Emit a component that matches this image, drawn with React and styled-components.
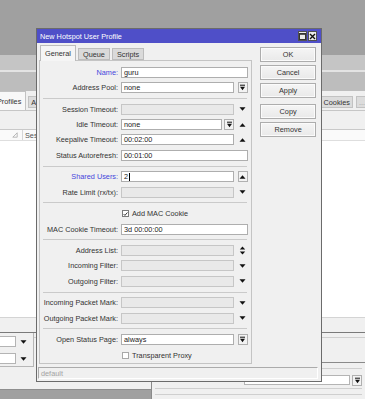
import React from 'react';
import styled, { createGlobalStyle } from 'styled-components';

const GlobalStyle = createGlobalStyle`
  html, body {
    margin: 0;
    padding: 0;
  }
  body {
    background: #a0a0a0;
    font-family: 'Liberation Sans', Arial, sans-serif;
  }
  * {
    box-sizing: border-box;
  }
`;

const Desktop = styled.div`
  position: relative;
  width: 365px;
  height: 399px;
  overflow: hidden;
  background: #a0a0a0;
  font-size: 7.3px;
  color: #2b2b2b;
`;

/* ---------- windows behind the dialog ---------- */

const BackWindow = styled.div`
  position: absolute;
  left: -8px;
  top: 55px;
  width: 378px;
  height: 335px;
  display: flex;
  flex-direction: column;
  background: #f0f0f0;
  border-bottom: 1px solid #8e8e8e;
`;

const Band = styled.div`
  flex-shrink: 0;
  height: ${(p) => p.$h}px;
  background: ${(p) => p.$bg};
  border-bottom: ${(p) => (p.$line ? `2px solid ${p.$line}` : 'none')};
`;

const TabStrip = styled.div`
  flex-shrink: 0;
  height: 20px;
  display: flex;
  align-items: flex-end;
  gap: 2px;
  padding-right: 2px;
  border-bottom: 1px solid #c6c6c6;
`;

const TabGroup = styled.div`
  display: flex;
  align-items: flex-end;
  gap: ${(p) => p.$gap || 2}px;
  margin-left: ${(p) => (p.$right ? 'auto' : '0')};
`;

const BackTab = styled.div`
  height: ${(p) => (p.$active ? 19 : 12)}px;
  margin-bottom: ${(p) => (p.$active ? 0 : 2)}px;
  padding: 0 ${(p) => (p.$active ? 4 : 2)}px;
  display: flex;
  align-items: center;
  white-space: nowrap;
  color: ${(p) => (p.$muted ? '#9c9c9c' : '#333')};
  background: ${(p) => (p.$active ? '#f8f8f8' : '#dcdcdc')};
  border: 1px solid #c2c2c2;
  border-bottom: ${(p) => (p.$active ? 'none' : '1px solid #c2c2c2')};
`;

const ToolArea = styled.div`
  flex-shrink: 0;
  height: 18px;
`;

const ListHeader = styled.div`
  flex-shrink: 0;
  height: 12px;
  display: flex;
  background: #fafafa;
  border-top: 1px solid #c9c9c9;
  border-bottom: 1px solid #dedede;
`;

const SortCell = styled.div`
  width: 31px;
  display: flex;
  align-items: center;
  justify-content: flex-end;
  padding-right: 4px;
  border-right: 1px solid #d6d6d6;
`;

const HeadCell = styled.div`
  width: 14px;
  padding-left: 2px;
  display: flex;
  align-items: center;
  overflow: hidden;
  color: #555;
  white-space: nowrap;
`;

const ListBody = styled.div`
  flex: 1;
  background: #fff;
`;

const StatusRow = styled.div`
  flex-shrink: 0;
  height: 15px;
  border-top: 1px solid #d4d4d4;
`;

const LowerPanel = styled.div`
  flex-shrink: 0;
  height: 35px;
  display: flex;
  border-top: 1px solid #7a7a7a;
`;

const GroupBox = styled.div`
  width: 42px;
  height: 34px;
  display: flex;
  flex-direction: column;
  gap: 6px;
  padding: 3px 6px 0 0;
  border-right: 1px solid #b6b6b6;
  border-bottom: 1px solid #b6b6b6;
`;

const BackRow = styled.div`
  height: 11px;
  display: flex;
  align-items: center;
  gap: 4px;
`;

const BackField = styled.div`
  flex: ${(p) => (p.$w ? 'none' : 1)};
  width: ${(p) => (p.$w ? `${p.$w}px` : 'auto')};
  height: ${(p) => p.$h || 11}px;
  background: #fff;
  border: 1px solid #b4b4b4;
`;

const RightArea = styled.div`
  flex: 1;
  padding-top: 4px;
`;

const BottomArea = styled.div`
  flex-shrink: 0;
  height: 22px;
`;

const LowerWindow = styled.div`
  position: absolute;
  left: 151px;
  top: 362px;
  width: 220px;
  height: 40px;
  display: flex;
  flex-direction: column;
  padding: 5px 9px 0 3px;
  background: #f0f0f0;
  border-top: 1px solid #8a8a8a;
  border-left: 1px solid #8a8a8a;
`;

const Line = styled.div`
  height: 1px;
  flex-shrink: 0;
  margin-top: ${(p) => p.$mt || 0}px;
  background: ${(p) => p.$color || '#cfcfcf'};
`;

const LowerFieldRow = styled.div`
  margin-top: 6px;
  display: flex;
  justify-content: flex-end;
  gap: 2px;
`;

/* ---------- dialog ---------- */

const Dialog = styled.div`
  position: absolute;
  left: 36px;
  top: 28px;
  width: 286px;
  height: 354px;
  display: flex;
  flex-direction: column;
  background: #f0f0f0;
  border: 1px solid #6b6b6b;
`;

const TitleBar = styled.div`
  flex-shrink: 0;
  height: 14px;
  display: flex;
  align-items: center;
  justify-content: space-between;
  padding: 0 4px 0 3px;
  background: #4f4fc8;
  color: #fff;
`;

const TitleButtons = styled.div`
  display: flex;
  gap: 1px;
`;

const TitleButton = styled.div`
  width: 9px;
  height: 10px;
  display: flex;
  align-items: center;
  justify-content: center;
  background: #ebebeb;
  border: 1px solid #505050;
`;

const Body = styled.div`
  flex: 1;
  min-height: 0;
  display: flex;
  gap: 8px;
  padding: 2px 5px 0 2px;
`;

const FormColumn = styled.div`
  width: 214px;
  display: flex;
  flex-direction: column;
`;

const TabRow = styled.div`
  position: relative;
  z-index: 1;
  flex-shrink: 0;
  height: 15px;
  display: flex;
  align-items: flex-end;
  gap: 2px;
  padding-left: 1px;
`;

const Tab = styled.div`
  height: ${(p) => (p.$active ? 16 : 12)}px;
  margin-bottom: ${(p) => (p.$active ? -1 : 0)}px;
  padding: 0 4px;
  display: flex;
  align-items: center;
  color: #333;
  background: ${(p) => (p.$active ? '#f5f5f5' : '#dadada')};
  border: 1px solid #bcbcbc;
  border-bottom: ${(p) => (p.$active ? 'none' : '1px solid #bcbcbc')};
`;

const Panel = styled.div`
  flex: 1;
  display: flex;
  flex-direction: column;
  padding: 6px 3px 0 3px;
  background: #f0f0f0;
  border: 1px solid #c4c4c4;
`;

const Group = styled.div`
  display: flex;
  flex-direction: column;
  gap: 4.3px;
`;

const Rule = styled.div`
  height: 1px;
  margin: 4.8px 1px 4.8px 0;
  background: #cacaca;
`;

const Row = styled.div`
  height: 11px;
  display: grid;
  grid-template-columns: 75px 127px;
  column-gap: 3px;
  align-items: center;
`;

const Label = styled.div`
  text-align: right;
  white-space: nowrap;
  color: ${(p) => (p.$blue ? '#4646dc' : '#333')};
`;

const FieldCell = styled.div`
  height: 11px;
  display: flex;
  align-items: center;
  gap: 2px;
`;

const Input = styled.div`
  flex: 1;
  height: 11px;
  display: flex;
  align-items: center;
  padding: 0 2px;
  overflow: hidden;
  white-space: nowrap;
  color: #222;
  background: ${(p) => (p.$disabled ? '#e9e9e9' : '#fff')};
  border: 1px solid ${(p) => (p.$disabled ? '#c6c6c6' : '#aeaeae')};
`;

const Caret = styled.span`
  display: inline-block;
  width: 1px;
  height: 8px;
  margin-left: 1px;
  background: #000;
`;

const Trail = styled.div`
  width: 12px;
  height: 11px;
  padding-left: 1px;
  display: flex;
  align-items: center;
  justify-content: center;
`;

const MiniButton = styled.div`
  width: 10px;
  height: 11px;
  flex-shrink: 0;
  display: flex;
  align-items: center;
  justify-content: center;
  background: #f3f3f3;
  border: 1px solid #b0b0b0;
`;

const CheckCell = styled.div`
  display: flex;
  align-items: center;
  gap: 3px;
  padding-left: 1px;
  color: #333;
  white-space: nowrap;
`;

const Box = styled.div`
  width: 7px;
  height: 7px;
  display: flex;
  align-items: center;
  justify-content: center;
  background: #fff;
  border: 1px solid ${(p) => (p.$checked ? '#7a7a7a' : '#a8a8a8')};
`;

const ButtonColumn = styled.div`
  width: 56px;
  display: flex;
  flex-direction: column;
  gap: 3px;
  padding-top: 2px;
`;

const DialogButton = styled.div`
  height: 15px;
  margin-top: ${(p) => (p.$spaced ? 3 : 0)}px;
  display: flex;
  align-items: center;
  justify-content: center;
  color: #333;
  background: linear-gradient(#f5f5f5, #e9e9e9);
  border: 1px solid #adadad;
  box-shadow: inset 0 0 0 1px #fbfbfb;
`;

const StatusBar = styled.div`
  flex-shrink: 0;
  height: 12px;
  margin: 3px 3px 2px 1px;
  padding-left: 2px;
  display: flex;
  align-items: center;
  color: #a3a3a3;
  border: 1px solid;
  border-color: #ababab #fff #fff #ababab;
`;

/* ---------- glyphs ---------- */

const Down = () => (
  <svg width="7" height="4" viewBox="0 0 7 4">
    <path d="M0.5 0.3h6L3.5 3.7z" fill="#111" />
  </svg>
);

const Up = () => (
  <svg width="7" height="4" viewBox="0 0 7 4">
    <path d="M0.5 3.7h6L3.5 0.3z" fill="#111" />
  </svg>
);

const UpDown = () => (
  <svg width="7" height="9" viewBox="0 0 7 9">
    <path d="M0.8 3.6h5.4L3.5 0.6z" fill="#111" />
    <path d="M0.8 5.4h5.4L3.5 8.4z" fill="#111" />
  </svg>
);

const MenuGlyph = () => (
  <svg width="7" height="7" viewBox="0 0 7 7">
    <path d="M1 1.2h5" stroke="#111" strokeWidth="1" />
    <path d="M1 2.8h5L3.5 6.2z" fill="#111" />
  </svg>
);

const Tick = () => (
  <svg width="6" height="6" viewBox="0 0 6 6">
    <path d="M0.8 3.1L2.3 4.7L5.3 1.2" stroke="#222" strokeWidth="1.1" fill="none" />
  </svg>
);

const SortMark = () => (
  <svg width="6" height="6" viewBox="0 0 6 6">
    <path d="M0.8 5.2L5.2 0.8V5.2z" stroke="#aaa" strokeWidth="0.8" fill="none" />
  </svg>
);

const MaxGlyph = () => (
  <svg width="7" height="7" viewBox="0 0 7 7">
    <rect x="0.5" y="0.5" width="6" height="6" stroke="#333" fill="none" />
    <path d="M0.5 1.3h6" stroke="#333" />
  </svg>
);

const CloseGlyph = () => (
  <svg width="7" height="7" viewBox="0 0 7 7">
    <path d="M1 1L6 6M6 1L1 6" stroke="#111" strokeWidth="1.4" />
  </svg>
);

const trailGlyph = {
  down: <Down />,
  up: <Up />,
  updown: <UpDown />,
  menu: (
    <MiniButton>
      <MenuGlyph />
    </MiniButton>
  ),
  upbox: (
    <MiniButton>
      <Up />
    </MiniButton>
  ),
};

/* ---------- data ---------- */

const groups = [
  [
    { label: 'Name', value: 'guru', blue: true },
    { label: 'Address Pool', value: 'none', trail: 'menu' },
  ],
  [
    { label: 'Session Timeout', disabled: true, trail: 'down' },
    { label: 'Idle Timeout', value: 'none', menu: true, trail: 'up' },
    { label: 'Keepalive Timeout', value: '00:02:00', trail: 'up' },
    { label: 'Status Autorefresh', value: '00:01:00' },
  ],
  [
    { label: 'Shared Users', value: '2', blue: true, caret: true, trail: 'upbox' },
    { label: 'Rate Limit (rx/tx)', disabled: true, trail: 'down' },
  ],
  [
    { check: 'Add MAC Cookie', checked: true },
    { label: 'MAC Cookie Timeout', value: '3d 00:00:00' },
  ],
  [
    { label: 'Address List', disabled: true, trail: 'updown' },
    { label: 'Incoming Filter', disabled: true, trail: 'down' },
    { label: 'Outgoing Filter', disabled: true, trail: 'down' },
  ],
  [
    { label: 'Incoming Packet Mark', disabled: true, trail: 'down' },
    { label: 'Outgoing Packet Mark', disabled: true, trail: 'down' },
  ],
  [
    { label: 'Open Status Page', value: 'always', trail: 'menu' },
    { check: 'Transparent Proxy' },
  ],
];

const buttons = [
  { text: 'OK' },
  { text: 'Cancel' },
  { text: 'Apply' },
  { text: 'Copy', spaced: true },
  { text: 'Remove' },
];

const FormRow = ({ item }) => {
  if (item.check) {
    return (
      <Row>
        <span />
        <CheckCell>
          <Box $checked={item.checked}>{item.checked && <Tick />}</Box>
          {item.check}
        </CheckCell>
      </Row>
    );
  }
  return (
    <Row>
      <Label $blue={item.blue}>{item.label}:</Label>
      <FieldCell>
        <Input $disabled={item.disabled}>
          {item.value}
          {item.caret && <Caret />}
        </Input>
        {item.menu && (
          <MiniButton>
            <MenuGlyph />
          </MiniButton>
        )}
        {item.trail && <Trail>{trailGlyph[item.trail]}</Trail>}
      </FieldCell>
    </Row>
  );
};

const App = () => (
  <>
    <GlobalStyle />
    <Desktop>
      <BackWindow>
        <Band $h={17} $bg='#c5c5c5' $line='#e3e3e3' />
        <Band $h={19} $bg='#bdbdbd' />
        <TabStrip>
          <TabGroup>
            <BackTab $active>Profiles</BackTab>
            <BackTab>Active</BackTab>
          </TabGroup>
          <TabGroup $right $gap={3}>
            <BackTab>Cookies</BackTab>
            <BackTab $muted>...</BackTab>
          </TabGroup>
        </TabStrip>
        <ToolArea />
        <ListHeader>
          <SortCell>
            <SortMark />
          </SortCell>
          <HeadCell>Ses</HeadCell>
        </ListHeader>
        <ListBody />
        <StatusRow />
        <LowerPanel>
          <GroupBox>
            <BackRow>
              <BackField />
              <Down />
            </BackRow>
            <BackRow>
              <BackField />
              <Down />
            </BackRow>
          </GroupBox>
          <RightArea>
            <Line />
          </RightArea>
        </LowerPanel>
        <BottomArea />
      </BackWindow>

      <LowerWindow>
        <Line />
        <LowerFieldRow>
          <BackField $w={106} $h={10} />
          <MiniButton>
            <MenuGlyph />
          </MiniButton>
        </LowerFieldRow>
        <Line $mt={2} />
        <Line $mt={5} />
      </LowerWindow>

      <Dialog>
        <TitleBar>
          <span>New Hotspot User Profile</span>
          <TitleButtons>
            <TitleButton>
              <MaxGlyph />
            </TitleButton>
            <TitleButton>
              <CloseGlyph />
            </TitleButton>
          </TitleButtons>
        </TitleBar>
        <Body>
          <FormColumn>
            <TabRow>
              <Tab $active>General</Tab>
              <Tab>Queue</Tab>
              <Tab>Scripts</Tab>
            </TabRow>
            <Panel>
              {groups.map((group, gi) => (
                <React.Fragment key={gi}>
                  {gi > 0 && <Rule />}
                  <Group>
                    {group.map((item, i) => (
                      <FormRow key={i} item={item} />
                    ))}
                  </Group>
                </React.Fragment>
              ))}
            </Panel>
          </FormColumn>
          <ButtonColumn>
            {buttons.map((b) => (
              <DialogButton key={b.text} $spaced={b.spaced}>
                {b.text}
              </DialogButton>
            ))}
          </ButtonColumn>
        </Body>
        <StatusBar>default</StatusBar>
      </Dialog>
    </Desktop>
  </>
);

export default App;
